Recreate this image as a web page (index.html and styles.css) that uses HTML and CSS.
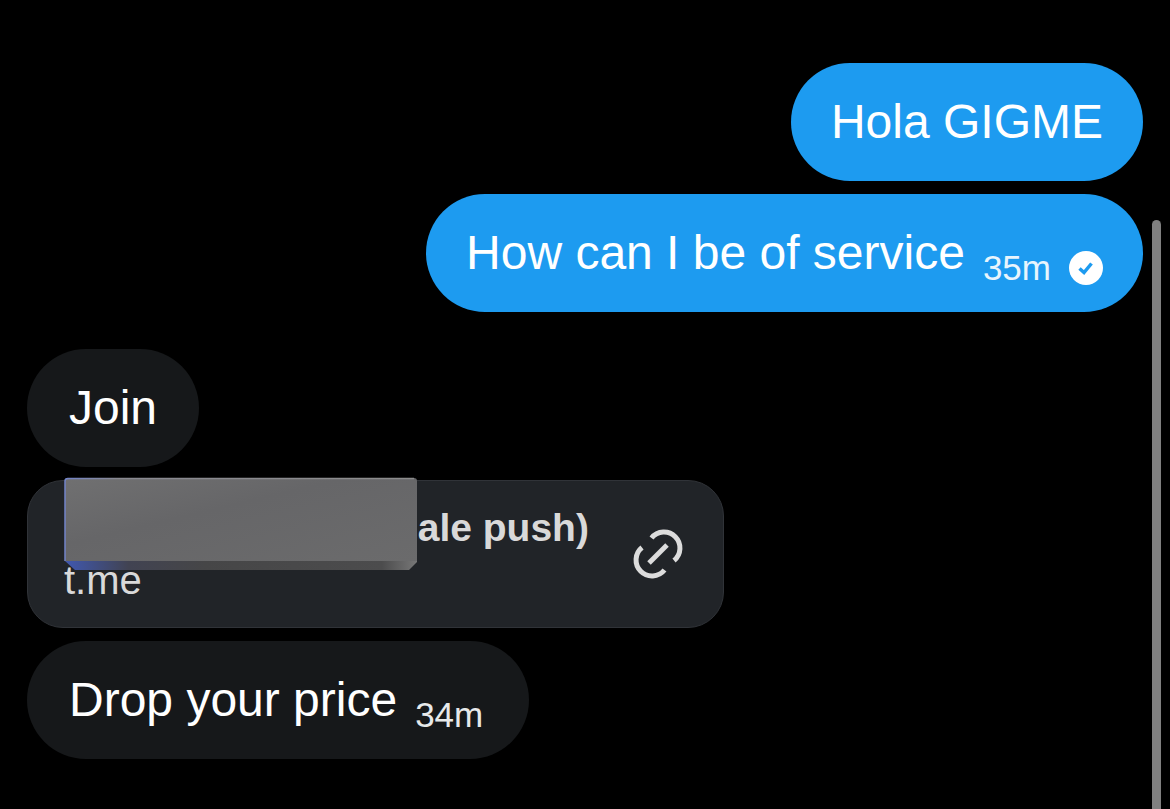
FILE: index.html
```html
<!DOCTYPE html>
<html lang="en">
  <head>
    <title>Messages</title>
    <meta charset="utf-8" />
    <meta name="viewport" content="width=device-width, initial-scale=1" />
    <link rel="stylesheet" href="styles.css">
  </head>
  <body>
    <main class="chat">
      <section class="group sent">
        <div class="bubble">Hola GIGME</div>
        <div class="bubble">
          <span>How can I be of service</span>
          <span class="meta">
            <time>35m</time>
            <svg class="check" viewBox="0 0 34 34" role="img" aria-label="Sent">
              <circle cx="17" cy="17" r="17" fill="#fff" />
              <path d="M10.500 17.500L15 21.500L22.500 12.500" fill="none" stroke="#1d9bf0" stroke-width="3.500" />
            </svg>
          </span>
        </div>
      </section>

      <section class="group received">
        <div class="bubble">Join</div>
        <a class="card" href="#">
          <span class="card-text">
            <strong class="card-title">sale push)</strong>
            <span class="card-host">t.me</span>
          </span>
          <svg class="link-icon" viewBox="0 0 50 50" aria-hidden="true">
            <g fill="none" stroke="#dcdcdc" stroke-width="5">
              <path d="M18.5 9A16 16 0 1 1 41 31.5" />
              <path d="M31.5 41A16 16 0 1 1 9 18.5" />
              <path d="M16 34L34 16" />
            </g>
          </svg>
          <svg class="cover" viewBox="0 0 354 94" aria-hidden="true">
            <defs>
              <linearGradient id="face" x1="0" y1="0" x2="1" y2="1">
                <stop offset="0" stop-color="#707071" />
                <stop offset="0.4" stop-color="#666668" />
                <stop offset="1" stop-color="#6b6b6c" />
              </linearGradient>
              <linearGradient id="bevel">
                <stop offset="0" stop-color="#4058b0" />
                <stop offset="0.18" stop-color="#414352" />
                <stop offset="0.4" stop-color="#464647" />
                <stop offset="0.9" stop-color="#4c4c4d" />
                <stop offset="1" stop-color="#777" />
              </linearGradient>
              <linearGradient id="edge" gradientUnits="userSpaceOnUse" x1="0" y1="0" x2="354" y2="0">
                <stop offset="0" stop-color="#7183c9" />
                <stop offset="0.15" stop-color="#898991" />
                <stop offset="1" stop-color="#8c8c8c" />
              </linearGradient>
            </defs>
            <path d="M1 83H353V85L345 93H11L1 84Z" fill="url(#bevel)" />
            <path d="M1 4Q1 1 4 1H350Q353 1 353 4V84H1Z" fill="url(#face)" />
            <path d="M1 84V4Q1 1.500 4 1.500H350" fill="none" stroke="url(#edge)" stroke-width="1.500" />
          </svg>
        </a>
        <div class="bubble">
          <span>Drop your price</span>
          <span class="meta"><time>34m</time></span>
        </div>
      </section>
      <div class="scroll-thumb"></div>
    </main>
  </body>
</html>
```
FILE: styles.css
```css
body {
  margin: 0;
  background-color: #000;
  color: #fff;
  font-family: "Liberation Sans", Arial, sans-serif;
}

.chat {
  position: relative;
  display: flex;
  flex-direction: column;
  gap: 37px;
  box-sizing: border-box;
  min-height: 100vh;
  padding: 63px 27px 50px;
}

.group {
  display: flex;
  flex-direction: column;
  align-items: flex-start;
  gap: 13px;
}

.sent {
  align-items: flex-end;
}

.bubble {
  display: flex;
  align-items: flex-end;
  gap: 18px;
  padding: 32px 40px;
  border-radius: 59px;
  background-color: #1d9bf0;
  font-size: 48px;
  line-height: 54px;
}

.received .bubble {
  padding: 32px 42px;
  background-color: #16181a;
}

.meta {
  display: flex;
  align-items: center;
  gap: 18px;
  font-size: 35px;
  line-height: 24px;
  color: #e8f5fd;
}

.received .meta {
  padding-right: 4px;
  color: #e7e9ea;
}

.check {
  width: 34px;
  height: 34px;
  margin: -5px 0;
}

.card {
  position: relative;
  display: flex;
  align-items: center;
  gap: 44px;
  padding: 20px 40px 20px 36px;
  border: 1px solid #303338;
  border-radius: 36px;
  background-color: #212428;
  color: #d9d9d9;
  font-size: 40px;
  line-height: 53px;
  text-decoration: none;
}

.card-text {
  display: flex;
  flex-direction: column;
}

.card-title {
  padding-left: 332px;
  font-size: 39px;
}

/* the host name stays above the cover */
.card-host {
  position: relative;
  z-index: 1;
}

.link-icon {
  width: 50px;
  height: 50px;
}

/* block laid over the first part of the title */
.cover {
  position: absolute;
  left: 36px;
  top: -4px;
  width: 354px;
  height: 94px;
}

.scroll-thumb {
  position: absolute;
  top: 220px;
  right: 9px;
  bottom: 0;
  width: 9px;
  border-radius: 5px 5px 0 0;
  background-color: #808080;
}
```
